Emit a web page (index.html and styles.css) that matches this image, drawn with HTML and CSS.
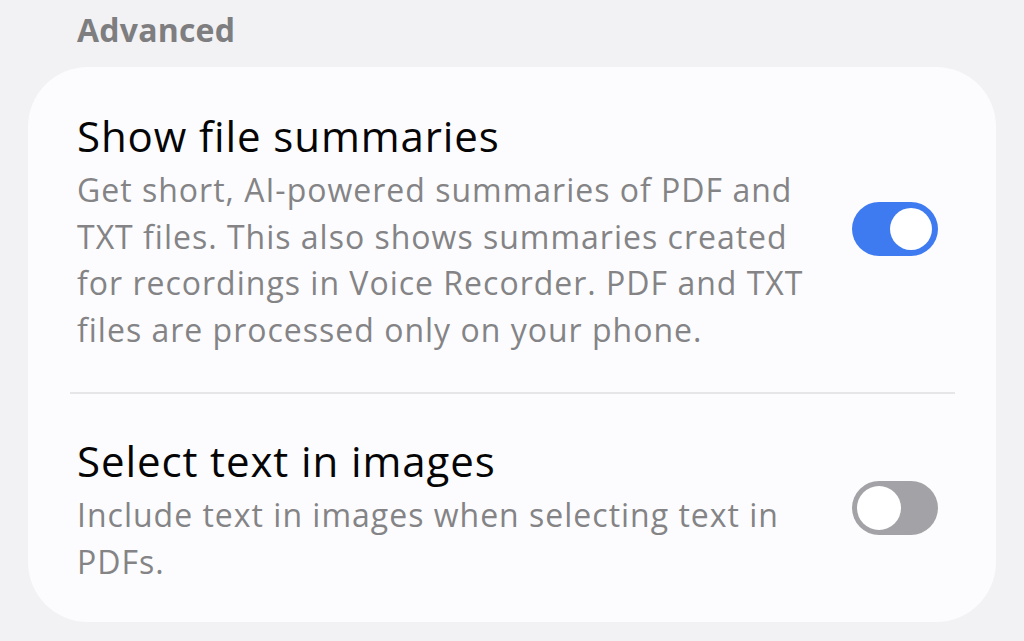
FILE: index.html
```html
<!DOCTYPE html>
<html>
<head>
<meta charset="utf-8">
<link rel="stylesheet" href="styles.css">
</head>
<body>
<div class="page">
  <div class="section-title">Advanced</div>
  <div class="card">
    <div class="row">
      <div class="texts">
        <div class="title">Show file summaries</div>
        <div class="desc">Get short, AI-powered summaries of PDF and TXT files. This also shows summaries created for recordings in Voice Recorder. PDF and TXT files are processed only on your phone.</div>
      </div>
      <div class="switch on"><div class="thumb"></div></div>
    </div>
    <div class="divider"></div>
    <div class="row">
      <div class="texts">
        <div class="title">Select text in images</div>
        <div class="desc">Include text in images when selecting text in PDFs.</div>
      </div>
      <div class="switch off"><div class="thumb"></div></div>
    </div>
  </div>
</div>
</body>
</html>
```
FILE: styles.css
```css
html, body {
  margin: 0;
  padding: 0;
  background: #f2f2f4;
}
body {
  font-family: "Open Sans", Roboto, sans-serif;
  width: 1024px;
  height: 641px;
  overflow: hidden;
}
.page {
  padding: 10px 28px 0 28px;
}
.section-title {
  font-size: 32px;
  font-weight: 700;
  color: #7e7e80;
  padding-left: 49px;
  line-height: 40px;
  letter-spacing: 0.2px;
}
.card {
  margin-top: 17px;
  background: #fcfcfe;
  border-radius: 60px;
  padding: 43px 0 37px 0;
}
.row {
  display: flex;
  align-items: center;
  padding: 0 58px 0 49px;
  gap: 30px;
}
.texts {
  flex: 1;
}
.title {
  font-size: 42px;
  line-height: 52px;
  color: #050505;
  letter-spacing: 0.9px;
}
.desc {
  font-size: 32px;
  line-height: 46.5px;
  color: #848486;
  margin-top: 5px;
  letter-spacing: 1px;
}
.divider {
  height: 2px;
  background: #e6e6e8;
  margin: 39px 41px 41px 42px;
}
.switch {
  width: 86px;
  height: 54px;
  border-radius: 27px;
  flex: none;
  position: relative;
  margin-bottom: 5px;
}
.switch.on {
  background: #3e7bf0;
}
.switch.off {
  background: #a3a3a7;
}
.thumb {
  position: absolute;
  border-radius: 50%;
  background: #ffffff;
}
.switch.on .thumb {
  top: 6px;
  right: 6px;
  width: 42px;
  height: 42px;
}
.switch.off .thumb {
  top: 5px;
  left: 5px;
  width: 44px;
  height: 44px;
}
```
